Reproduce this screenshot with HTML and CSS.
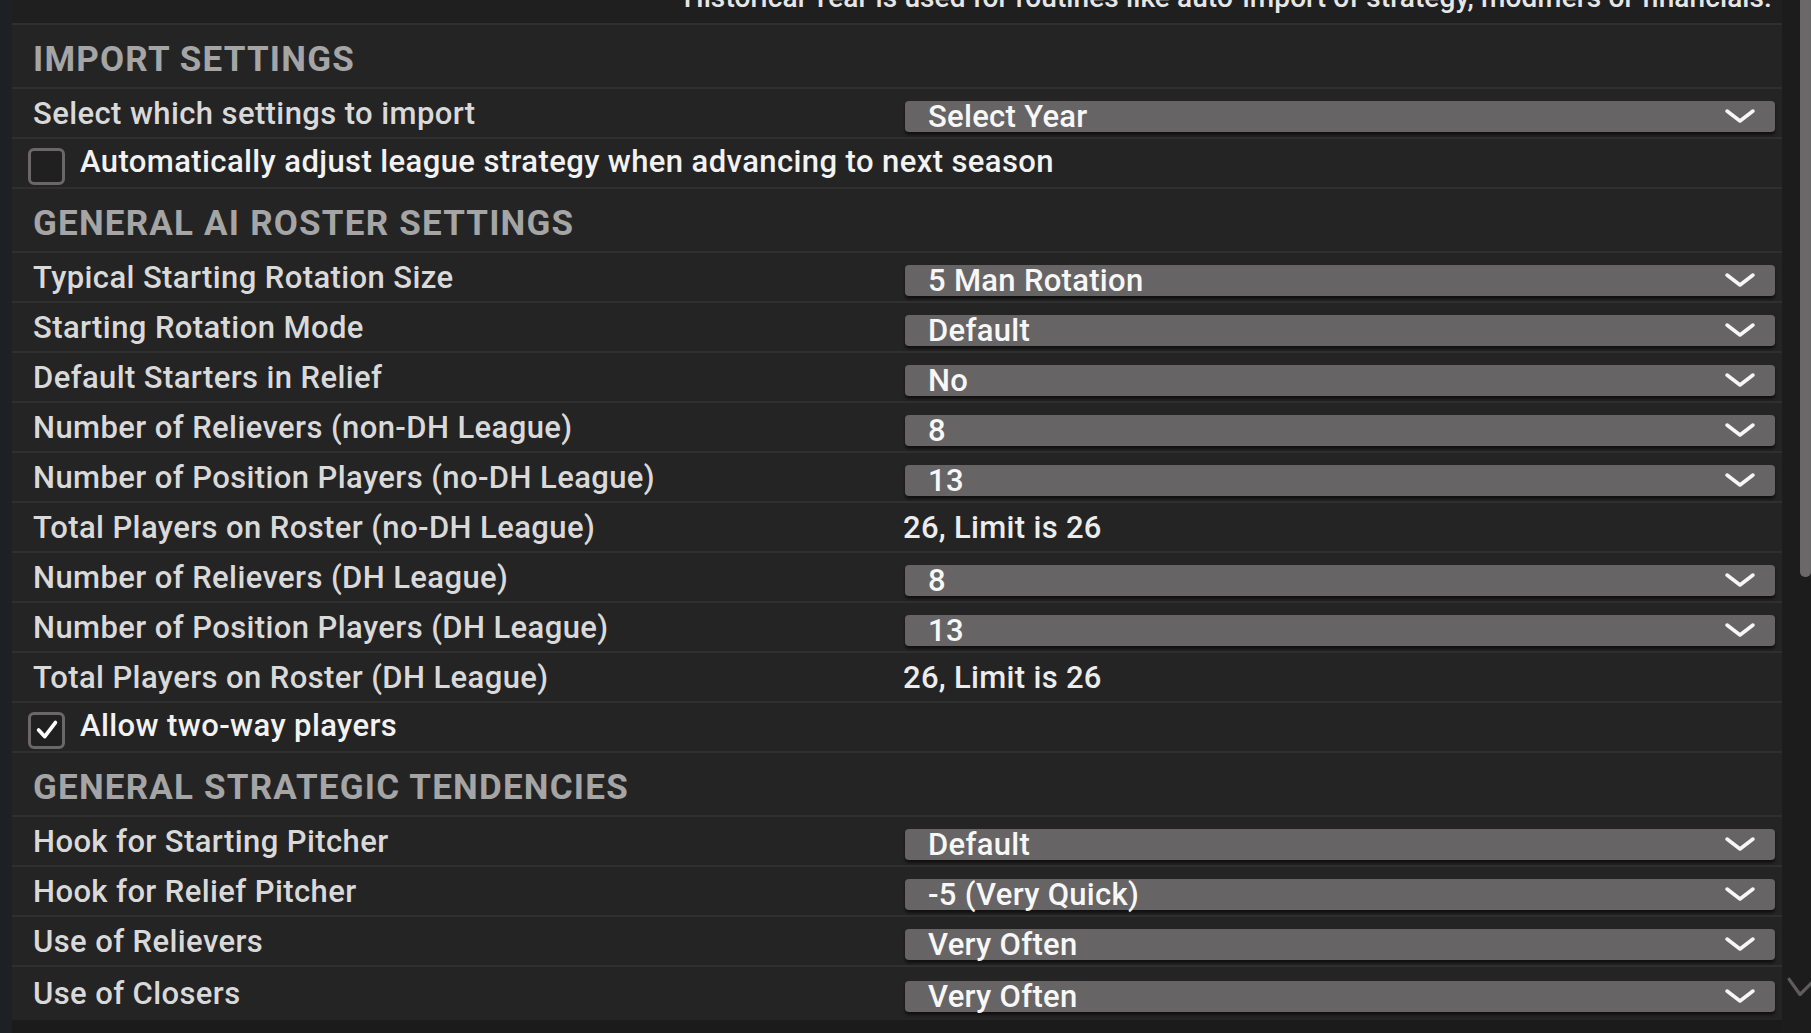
FILE: index.html
```html
<!DOCTYPE html>
<html lang="en">
<head>
<meta charset="utf-8">
<title>League Settings</title>
<link rel="stylesheet" href="styles.css">
</head>
<body>
<div class="screen">
  <div class="edge"></div>
  <main class="panel">
    <div class="note"><span>Historical Year is used for routines like auto-import of strategy, modifiers or financials.</span></div>

    <div class="row head">IMPORT SETTINGS</div>
    <div class="row">
      <span class="label">Select which settings to import</span>
      <div class="select"><span>Select Year</span><svg class="chev" viewBox="0 0 32 16"><path d="M3 3 L16 13 L29 3"/></svg></div>
    </div>
    <div class="row">
      <label class="check"><span class="box"></span><span class="ctext">Automatically adjust league strategy when advancing to next season</span></label>
    </div>

    <div class="row head">GENERAL AI ROSTER SETTINGS</div>
    <div class="row">
      <span class="label">Typical Starting Rotation Size</span>
      <div class="select"><span>5 Man Rotation</span><svg class="chev" viewBox="0 0 32 16"><path d="M3 3 L16 13 L29 3"/></svg></div>
    </div>
    <div class="row">
      <span class="label">Starting Rotation Mode</span>
      <div class="select"><span>Default</span><svg class="chev" viewBox="0 0 32 16"><path d="M3 3 L16 13 L29 3"/></svg></div>
    </div>
    <div class="row">
      <span class="label">Default Starters in Relief</span>
      <div class="select"><span>No</span><svg class="chev" viewBox="0 0 32 16"><path d="M3 3 L16 13 L29 3"/></svg></div>
    </div>
    <div class="row">
      <span class="label">Number of Relievers (non-DH League)</span>
      <div class="select"><span>8</span><svg class="chev" viewBox="0 0 32 16"><path d="M3 3 L16 13 L29 3"/></svg></div>
    </div>
    <div class="row">
      <span class="label">Number of Position Players (no-DH League)</span>
      <div class="select"><span>13</span><svg class="chev" viewBox="0 0 32 16"><path d="M3 3 L16 13 L29 3"/></svg></div>
    </div>
    <div class="row">
      <span class="label">Total Players on Roster (no-DH League)</span>
      <span class="value">26, Limit is 26</span>
    </div>
    <div class="row">
      <span class="label">Number of Relievers (DH League)</span>
      <div class="select"><span>8</span><svg class="chev" viewBox="0 0 32 16"><path d="M3 3 L16 13 L29 3"/></svg></div>
    </div>
    <div class="row">
      <span class="label">Number of Position Players (DH League)</span>
      <div class="select"><span>13</span><svg class="chev" viewBox="0 0 32 16"><path d="M3 3 L16 13 L29 3"/></svg></div>
    </div>
    <div class="row">
      <span class="label">Total Players on Roster (DH League)</span>
      <span class="value">26, Limit is 26</span>
    </div>
    <div class="row">
      <label class="check"><span class="box"><svg viewBox="0 0 30 30"><path d="M6 15 L12.5 22 L24 7"/></svg></span><span class="ctext">Allow two-way players</span></label>
    </div>

    <div class="row head">GENERAL STRATEGIC TENDENCIES</div>
    <div class="row">
      <span class="label">Hook for Starting Pitcher</span>
      <div class="select"><span>Default</span><svg class="chev" viewBox="0 0 32 16"><path d="M3 3 L16 13 L29 3"/></svg></div>
    </div>
    <div class="row">
      <span class="label">Hook for Relief Pitcher</span>
      <div class="select"><span>-5 (Very Quick)</span><svg class="chev" viewBox="0 0 32 16"><path d="M3 3 L16 13 L29 3"/></svg></div>
    </div>
    <div class="row">
      <span class="label">Use of Relievers</span>
      <div class="select"><span>Very Often</span><svg class="chev" viewBox="0 0 32 16"><path d="M3 3 L16 13 L29 3"/></svg></div>
    </div>
    <div class="row last">
      <span class="label">Use of Closers</span>
      <div class="select"><span>Very Often</span><svg class="chev" viewBox="0 0 32 16"><path d="M3 3 L16 13 L29 3"/></svg></div>
    </div>
  </main>
  <div class="gutter"></div>
  <div class="scrollbar">
    <div class="thumb"></div>
    <svg class="down" viewBox="0 0 24 24"><path d="M2 4 L12 18 L24 6"/></svg>
  </div>
</div>
</body>
</html>
```

FILE: styles.css
```css
html, body {
  margin: 0;
  padding: 0;
  background: #1b1b1c;
}

.screen {
  display: flex;
  width: 1811px;
  height: 1033px;
  overflow: hidden;
  font-family: Roboto, "Liberation Sans", sans-serif;
  position: relative;
}

.edge {
  width: 12px;
  flex: none;
  background: #1d2125;
}

.panel {
  width: 1770px;
  flex: none;
  height: 1020px;
  background: #242425;
  display: flex;
  flex-direction: column;
}

.note {
  height: 25px;
  flex: none;
  box-sizing: border-box;
  border-bottom: 2px solid #303031;
  overflow: hidden;
  text-align: right;
  padding-right: 10px;
  background: #1f1f20;
}

.note span {
  display: block;
  margin-top: -17px;
  line-height: 30px;
  font-size: 28px;
  font-weight: 500;
  letter-spacing: 0.1px;
  color: #e6e6e6;
  white-space: nowrap;
}

.row {
  display: grid;
  grid-template-columns: 893px 870px;
  align-items: center;
  height: 50px;
  flex: none;
  box-sizing: border-box;
  border-bottom: 2px solid #2f2f30;
}

.row.last {
  border-bottom: none;
  height: 52px;
}

.row.head {
  display: flex;
  height: 64px;
  padding: 6px 0 0 21px;
  font-size: 35px;
  font-weight: 700;
  letter-spacing: 1.2px;
  color: #a5a5a6;
}

.label {
  padding-left: 21px;
  font-size: 31px;
  font-weight: 500;
  letter-spacing: 0.4px;
  color: #d9d9d9;
  white-space: nowrap;
}

.value {
  margin-left: -2px;
  font-size: 31px;
  font-weight: 500;
  letter-spacing: 0.3px;
  color: #ececec;
}

.select {
  height: 31px;
  margin-top: 6px;
  border-radius: 4px;
  background: #676465;
  box-shadow: 0 3px 3px rgba(0, 0, 0, 0.55);
  display: flex;
  align-items: center;
  justify-content: space-between;
  padding: 0 19px 0 23px;
  box-sizing: border-box;
  font-size: 31px;
  font-weight: 500;
  letter-spacing: 0.3px;
  color: #f7f7f7;
}

.select span {
  display: block;
  line-height: 31px;
  white-space: nowrap;
}

.chev {
  width: 32px;
  height: 16px;
  fill: none;
  stroke: #f7f7f7;
  stroke-width: 3.5;
  stroke-linecap: round;
  stroke-linejoin: round;
}

.check {
  grid-column: 1 / 3;
  display: flex;
  align-items: center;
  padding-left: 16px;
}

.box {
  width: 37px;
  height: 37px;
  box-sizing: border-box;
  border: 3px solid #6b6768;
  border-radius: 6px;
  background: #202021;
  margin-top: 6px;
  margin-right: 15px;
  display: flex;
  align-items: center;
  justify-content: center;
  flex: none;
}

.box svg {
  width: 28px;
  height: 28px;
  fill: none;
  stroke: #ffffff;
  stroke-width: 4;
  stroke-linecap: round;
  stroke-linejoin: round;
}

.ctext {
  font-size: 31px;
  font-weight: 500;
  letter-spacing: 0.4px;
  color: #f2f2f2;
  margin-top: -4px;
  white-space: nowrap;
}

.gutter {
  width: 18px;
  flex: none;
  background: #1c1c1d;
}

.scrollbar {
  width: 11px;
  flex: none;
  background: #1c1c1d;
  display: flex;
  flex-direction: column;
  position: relative;
}

.thumb {
  height: 577px;
  background: #6a6869;
  border-radius: 0 0 5px 5px;
}

.down {
  position: absolute;
  left: -13px;
  top: 975px;
  width: 26px;
  height: 26px;
  fill: none;
  stroke: #5e5c5d;
  stroke-width: 3;
  stroke-linecap: round;
  stroke-linejoin: round;
}
```
